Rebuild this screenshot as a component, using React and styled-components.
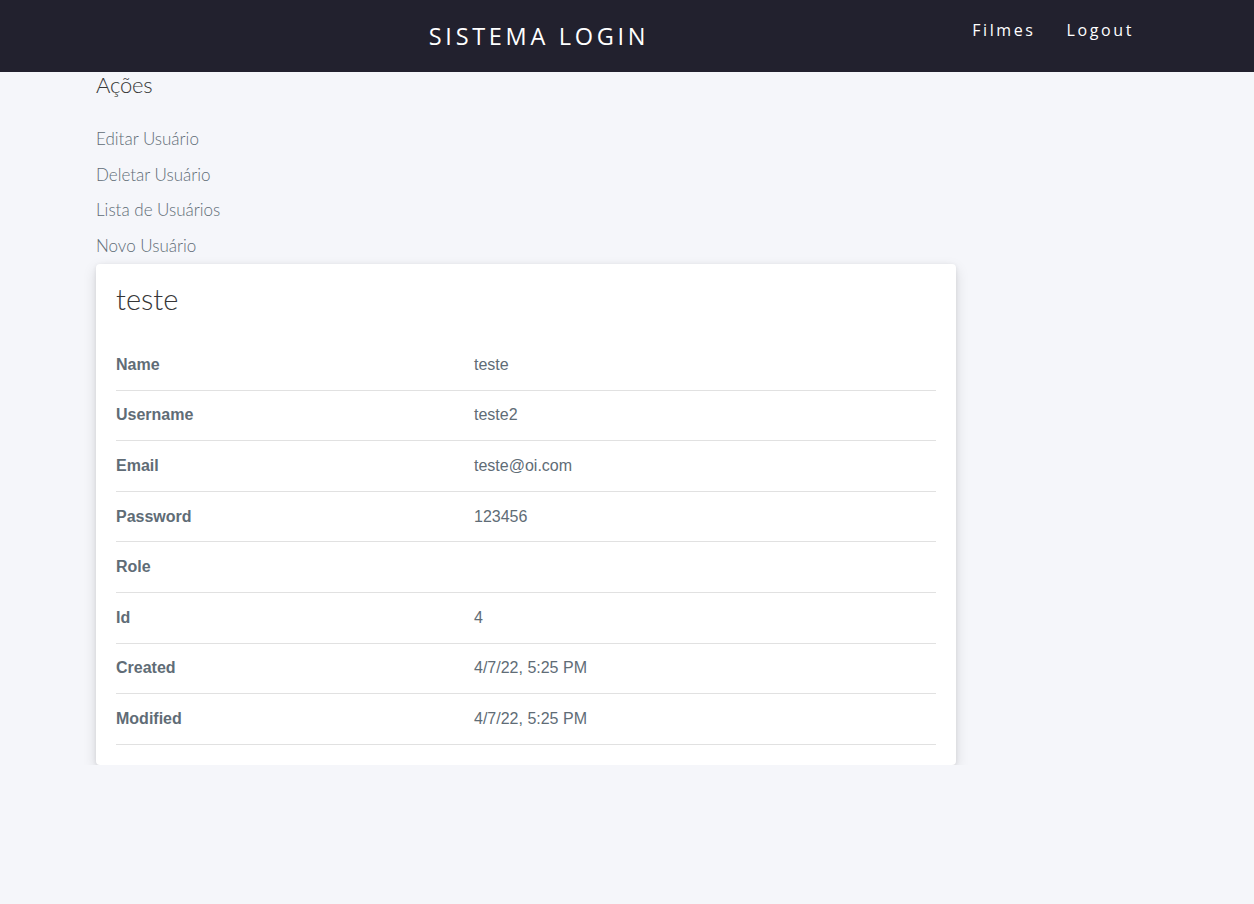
import React from "react";
import styled, { createGlobalStyle } from "styled-components";

const Global = createGlobalStyle`
  html, body { margin: 0; padding: 0; }
  body { background: #f5f6fa; font-family: "Liberation Sans", Arial, sans-serif; color: #606c76; }
`;

const TopBar = styled.nav`
  height: 72px;
  background: #22212e;
  display: grid;
  grid-template-columns: 1fr auto 1fr;
  align-items: center;
  padding: 0 120px 0 96px;
  box-sizing: border-box;
`;

const Brand = styled.a`
  grid-column: 2;
  font-family: "Open Sans", "Noto Sans", sans-serif;
  font-size: 23.5px;
  letter-spacing: 3.7px;
  color: #fff;
  text-decoration: none;
  transform: translateX(-76px);
`;

const NavLinks = styled.div`
  grid-column: 3;
  justify-self: end;
  display: flex;
  gap: 31px;
  margin-top: -13px;
`;

const NavLink = styled.a`
  font-family: "Open Sans", "Noto Sans", sans-serif;
  font-size: 16px;
  letter-spacing: 2.6px;
  color: #fff;
  text-decoration: none;
`;

const Main = styled.main`
  padding: 0 96px;
  width: 860px;
`;

const Side = styled.aside`
  display: flex;
  flex-direction: column;
`;

const SideTitle = styled.h4`
  font-family: Lato, sans-serif;
  font-weight: 300;
  font-size: 22px;
  color: #363637;
  margin: -1px 0 31px;
  letter-spacing: -0.2px;
`;

const SideLink = styled.a`
  font-family: Lato, sans-serif;
  font-weight: 300;
  font-size: 17px;
  color: #606c76;
  line-height: 20px;
  margin-bottom: 15.7px;
  text-decoration: none;
  &:last-child { margin-bottom: 8px; }
`;

const Card = styled.div`
  background: #fff;
  border-radius: 4px;
  box-shadow: 0 5px 14px rgba(0,0,0,0.13), 0 1px 4px rgba(0,0,0,0.08);
  padding: 20px 20px 20px;
`;

const CardTitle = styled.h3`
  font-family: Lato, sans-serif;
  font-weight: 300;
  font-size: 29px;
  color: #363637;
  margin: -2px 0 24px;
  line-height: 34px;
`;

const Table = styled.table`
  width: 100%;
  border-collapse: collapse;
`;

const Row = styled.tr`
  border-bottom: 1px solid #e1e1e1;
`;

const Th = styled.th`
  text-align: left;
  font-weight: bold;
  font-size: 16px;
  color: #606c76;
  width: 358px;
  height: 49.6px;
  padding: 0;
  vertical-align: middle;
`;

const Td = styled.td`
  font-size: 16px;
  color: #606c76;
  padding: 0;
`;

const rows = [
  ["Name", "teste"],
  ["Username", "teste2"],
  ["Email", "teste@oi.com"],
  ["Password", "123456"],
  ["Role", ""],
  ["Id", "4"],
  ["Created", "4/7/22, 5:25 PM"],
  ["Modified", "4/7/22, 5:25 PM"],
];

export default function App() {
  return (
    <>
      <Global />
      <TopBar>
        <Brand href="#">SISTEMA LOGIN</Brand>
        <NavLinks>
          <NavLink href="#">Filmes</NavLink>
          <NavLink href="#">Logout</NavLink>
        </NavLinks>
      </TopBar>
      <Main>
        <Side>
          <SideTitle>Ações</SideTitle>
          <SideLink href="#">Editar Usuário</SideLink>
          <SideLink href="#">Deletar Usuário</SideLink>
          <SideLink href="#">Lista de Usuários</SideLink>
          <SideLink href="#">Novo Usuário</SideLink>
        </Side>
        <Card>
          <CardTitle>teste</CardTitle>
          <Table>
            <tbody>
              {rows.map(([k, v]) => (
                <Row key={k}>
                  <Th>{k}</Th>
                  <Td>{v}</Td>
                </Row>
              ))}
            </tbody>
          </Table>
        </Card>
      </Main>
    </>
  );
}
